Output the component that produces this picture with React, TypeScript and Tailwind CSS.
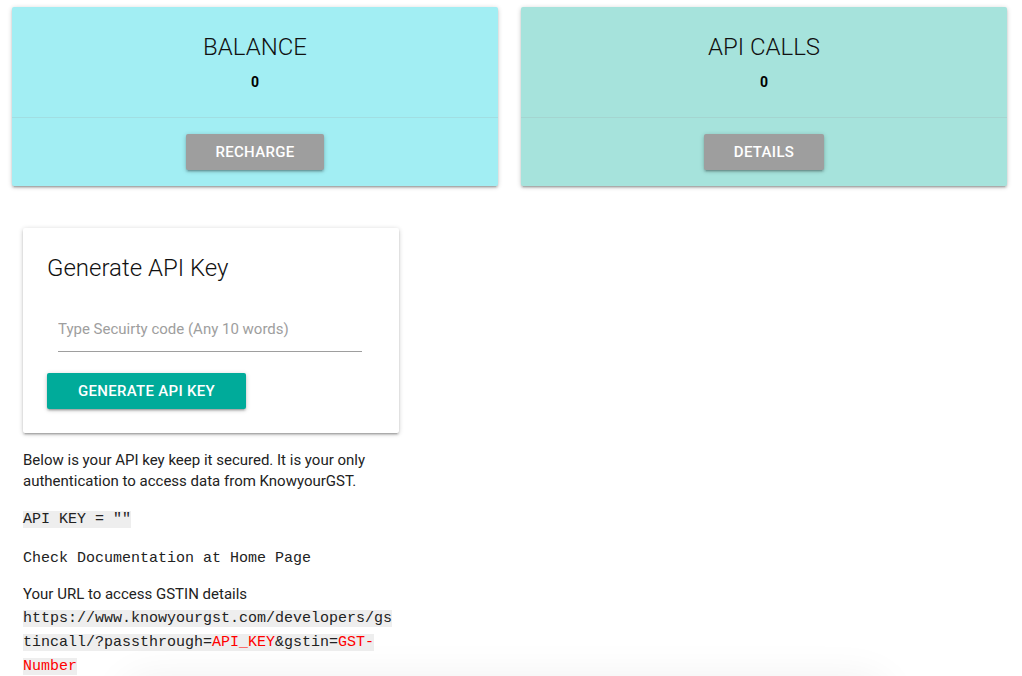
import React from "react";

const cardShadow =
  "shadow-[0_2px_2px_0_rgba(0,0,0,0.14),0_3px_1px_-2px_rgba(0,0,0,0.12),0_1px_5px_0_rgba(0,0,0,0.2)]";

function StatCard({title, value, action, bg}: {title: string; value: string; action: string; bg: string}) {
    return (
        <div className={`w-[486px] rounded-[2px] ${bg} ${cardShadow}`}>
            {/* content */}
            <div className="p-6 text-center">
                <div className="text-[24px] leading-[32px] font-light text-[#111] mb-2">{title}</div>
                <p className="text-[14px] leading-[22px] font-bold text-black">{value}</p>
            </div>
            {/* actions */}
            <div className="border-t border-[rgba(160,160,160,0.2)] py-4 flex justify-center">
                <button className={`h-9 px-[30px] rounded-[2px] bg-[#9e9e9e] text-white text-[15px] font-medium tracking-[0.3px] uppercase ${cardShadow}`}>
                    {action}
                </button>
            </div>
        </div>
    );
}

export default function App() {
    return (
        <div className="relative min-h-[676px] overflow-hidden bg-white font-['Roboto',sans-serif] text-[#222]">
            {/* top stat cards */}
            <div className="flex gap-[23px] pl-[12px] pt-[7px]">
                <StatCard title="BALANCE" value="0" action="Recharge" bg="bg-[#a2eef3]" />
                <StatCard title="API CALLS" value="0" action="Details" bg="bg-[#a6e3dc]" />
            </div>

            <div className="ml-[23px] mt-[42px] w-[376px]">
                {/* generate key card */}
                <div className={`bg-white rounded-[2px] p-6 ${cardShadow}`}>
                    <div className="text-[24px] leading-[32px] font-light text-[#111]">Generate API Key</div>
                    <div className="ml-[11px] mt-[22px] w-[304px]">
                        <input
                            type="text"
                            placeholder="Type Secuirty code (Any 10 words)"
                            className="w-full h-[46px] border-b border-[#9e9e9e] bg-transparent text-[15px] text-[#333] placeholder:text-[#9e9e9e] outline-none"
                        />
                    </div>
                    <button className={`mt-[21px] h-9 w-[199px] rounded-[2px] bg-[#00ab9a] text-white text-[15px] font-medium tracking-[0.3px] ${cardShadow}`}>
                        GENERATE API KEY
                    </button>
                </div>

                {/* key info */}
                <p className="mt-[17px] text-[15px] leading-[21px] text-[#222]">
                    Below is your API key keep it secured. It is your only authentication to access data from KnowyourGST.
                </p>
                <p className="mt-[17px] font-['Liberation_Mono','Courier_New',monospace] text-[15px] leading-[21px] text-[#222]">
                    <code className="bg-[#eeeeee]">API KEY = ""</code>
                </p>
                <p className="mt-[18px] font-['Liberation_Mono','Courier_New',monospace] text-[15px] leading-[21px] text-[#222]">
                    Check Documentation at Home Page
                </p>
                <p className="mt-[14px] text-[15px] leading-[23px] text-[#222] break-words">
                    Your URL to access GSTIN details
                    <br />
                    <code className="bg-[#eeeeee] font-['Liberation_Mono','Courier_New',monospace] text-[15px] leading-[23px]">
                        https://www.knowyourgst.com/developers/gstincall/?passthrough=
                        <span className="text-[#ff0000]">API_KEY</span>
                        &amp;gstin=
                        <span className="text-[#ff0000]">GST-Number</span>
                    </code>
                </p>
            </div>

            {/* faint shadow of a floating bar below the fold */}
            <div className="absolute left-[120px] top-[676px] h-[60px] w-[770px] rounded-full shadow-[0_0_40px_rgba(0,0,0,0.06)]" />
        </div>
    );
}
